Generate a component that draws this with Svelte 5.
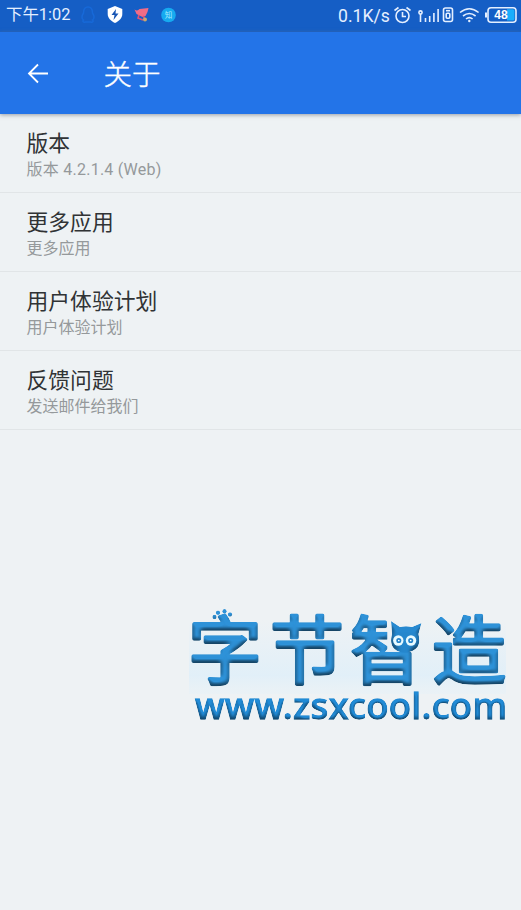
<script>
  const items = [
    { title: '版本', detail: '版本 4.2.1.4 (Web)', latin: true },
    { title: '更多应用', detail: '更多应用' },
    { title: '用户体验计划', detail: '用户体验计划' },
    { title: '反馈问题', detail: '发送邮件给我们' }
  ];
</script>

<div class="screen">
  <div class="status">
    <span class="time">下午1:02</span>
    <svg class="notes" width="104" height="26" viewBox="76 2 104 26">
      <path d="M83.500 20c-1.500 1 0 3 2 2h5c2 1 3.500-1 2-2 2-1.500 2-4 0-7 0-4-2-6-4.500-6s-4.500 2-4.500 6c-2 3-2 5.500 0 7z" fill="none" stroke="#1769d8" stroke-width="1.500" />
      <path d="M115 6l7.300 3v5c0 4-3 7-7.300 9-4.300-2-7.300-5-7.300-9V9z" fill="#fff" />
      <path d="M116 9l-4.500 6h3l-1 5 5-6.500h-3z" fill="#1855b4" />
      <path d="M134.500 9.500q3 2 5-.5l9-1-1 4-2 4-3 1-6-3z" fill="#f16c86" />
      <path d="M139 15l-1 3 5 2M143 16l2 3" fill="none" stroke="#df5277" stroke-width="1.600" />
      <circle cx="145" cy="19.500" r="2" fill="#c9a66f" />
      <circle cx="168.500" cy="15" r="7.300" fill="#16aaf0" />
      <text x="168.500" y="17.800" text-anchor="middle" font-size="7.500" fill="#a6eaff">知</text>
    </svg>
    <span class="rate">0.1K/s</span>
    <svg class="system" width="130" height="26" viewBox="391 2 130 26" fill="none" stroke="#e4efff" stroke-width="1.600">
      <circle cx="402.500" cy="16" r="6.500" />
      <path d="M402.500 12v4.500h3.500M394.500 10.500l4-3M406.500 7.500l4 3" />
      <circle cx="420.500" cy="12.500" r="1.600" />
      <path d="M420.500 14v8M425.500 18v4M429.700 16v6M433.900 13v9M438.100 9v13" />
      <rect x="443.500" y="8" width="9" height="13.500" rx="2" />
      <path d="M446 10.700h4" />
      <rect x="446.200" y="13.300" width="3.600" height="5" rx="1" />
      <path d="M460 12.500q9.300-7.500 18.600 0M463 16q6.300-5 12.600 0M466 19q3.300-2.800 6.600 0" />
      <circle cx="469.300" cy="21" r="1.200" fill="#e4efff" stroke="none" />
      <rect x="488" y="7.700" width="28" height="14.500" rx="3" />
      <path d="M486 12.500v5" stroke-width="2" />
      <path d="M507 9.300h6q1.500 0 1.500 1.500v8.200q0 1.500-1.500 1.500h-6z" fill="#19aefc" stroke="none" />
      <text x="501" y="19" text-anchor="middle" font-size="12" font-weight="700" fill="#fff" stroke="none">48</text>
    </svg>
  </div>

  <header>
    <svg width="22" height="22" viewBox="0 0 22 22" fill="none" stroke="#fff" stroke-width="1.800">
      <path d="M21 11.500H2M11 2.500l-9 9 9 9" />
    </svg>
    <h1>关于</h1>
  </header>

  <main>
    {#each items as item}
      <section>
        <h2>{item.title}</h2>
        <p class:latin={item.latin}>{item.detail}</p>
      </section>
    {/each}
  </main>

  <svg class="brand" width="333" height="160" viewBox="180 580 333 160">
    <defs>
      <linearGradient id="halo" x1="0" y1="0" x2="0" y2="1">
        <stop offset="0" stop-color="#dceefa" stop-opacity="0" />
        <stop offset=".75" stop-color="#dceefa" stop-opacity=".7" />
        <stop offset="1" stop-color="#e5f1f8" stop-opacity=".4" />
      </linearGradient>
      <filter id="bevel" x="180" y="600" width="341" height="130" filterUnits="userSpaceOnUse" color-interpolation-filters="sRGB">
        <feGaussianBlur in="SourceAlpha" stdDeviation="2" result="soft" />
        <feDiffuseLighting in="soft" surfaceScale="3.500" diffuseConstant="1.150" lighting-color="#fff" result="light">
          <feDistantLight azimuth="275" elevation="58" />
        </feDiffuseLighting>
        <feComposite in="SourceGraphic" in2="light" operator="arithmetic" k1=".65" k2=".37" result="shade" />
        <feComposite in="shade" in2="SourceAlpha" operator="in" />
      </filter>
      <mask id="face" maskUnits="userSpaceOnUse" x="180" y="590" width="341" height="140">
        <rect x="180" y="590" width="341" height="140" fill="#fff" />
        <rect x="387.500" y="606" width="38" height="45.500" fill="#000" />
      </mask>
    </defs>
    <rect x="189" y="620" width="317" height="74" fill="url(#halo)" />
    <g filter="url(#bevel)">
      <g mask="url(#face)">
        <text class="name" x="188 270 350 432" y="677.500">字节智造</text>
      </g>
      <g fill="#2d8fd4">
        <circle cx="214.500" cy="617" r="2.200" />
        <circle cx="218" cy="612.800" r="2.200" />
        <circle cx="224.500" cy="611.300" r="2.200" />
        <circle cx="230" cy="614.500" r="2.200" />
      </g>
      <path d="M391 621l9 6q6-1.500 12 0l9.500-4-3 11c1.500 7 1 12-3 15-7 5-15 5-21 0-4-4-4-9-2.500-15z" fill="#2586cc" />
    </g>
    <g fill="#e8faff">
      <circle cx="398.300" cy="640.500" r="5.200" />
      <circle cx="411" cy="640.500" r="5.200" />
    </g>
    <g fill="#fff" stroke="#2583c9" stroke-width="1.700">
      <circle cx="398.800" cy="640.500" r="1.700" />
      <circle cx="410.700" cy="640.500" r="1.700" />
    </g>
    <text class="address" filter="url(#bevel)" x="195" y="719" textLength="312" lengthAdjust="spacing">www.zsxcool.com</text>
  </svg>
</div>

<style>
  :global(body) { margin: 0; }
  .screen {
    position: relative;
    height: 910px;
    overflow: hidden;
    background: #eef2f4;
    font-family: Roboto, "Noto Sans CJK SC", sans-serif;
  }
  .status {
    height: 32px;
    display: flex;
    align-items: center;
    background: #155ec5;
    color: #e4efff;
  }
  .time { width: 70px; padding: 0 0 2px 6px; font-size: 16.400px; line-height: 24px; white-space: nowrap; }
  .notes { margin-top: -2px; flex: none; }
  .rate { margin-left: auto; width: 53px; padding-bottom: 1px; font-size: 17.600px; white-space: nowrap; }
  .system { margin-top: -2px; flex: none; font-family: "Liberation Sans", sans-serif; }
  header {
    position: relative;
    height: 82px;
    box-sizing: border-box;
    display: flex;
    align-items: center;
    padding-left: 27px;
    background: #2374e8;
    box-shadow: 0 1px 4px #6d7480aa;
    color: #fff;
  }
  h1 {
    margin: 5px 0 0 54.500px;
    font-size: 28.500px;
    font-weight: 300;
    line-height: 40px;
    -webkit-text-stroke: .4px #fff;
  }
  section {
    height: 79.100px;
    box-sizing: border-box;
    padding: 16px 26.500px 0;
    border-bottom: 1px solid #e1e5e7;
  }
  h2 { margin: 0; font-size: 21.800px; font-weight: 400; line-height: 28px; color: #303335; }
  p { margin: 0; font-size: 16px; font-weight: 400; line-height: 24px; color: #95999b; }
  .latin { letter-spacing: .25px; }
  .brand { position: absolute; left: 180px; top: 580px; overflow: visible; }
  .name {
    font: 400 74px "Noto Sans CJK SC", sans-serif;
    fill: #2d8fd4;
    stroke: #2d8fd4;
    stroke-width: 3.500px;
    stroke-linejoin: round;
  }
  .address { font: 500 36.500px "Noto Sans", sans-serif; fill: #2088d2; stroke: #2088d2; stroke-width: 1.300px; }
</style>
